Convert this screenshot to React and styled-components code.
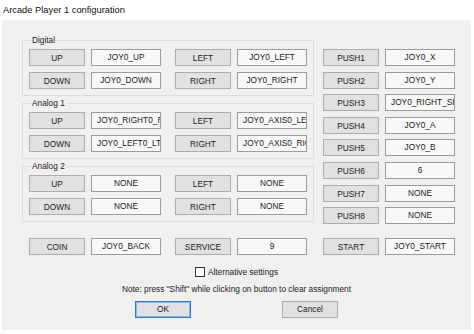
import React from 'react'
import styled, { createGlobalStyle } from 'styled-components'

const GlobalStyle = createGlobalStyle`
  html, body {
    margin: 0;
    padding: 0;
    background: #fff;
  }

  body {
    font-family: "Liberation Sans", Arial, sans-serif;
    color: #1a1a1a;
  }
`

const groups = [
  {
    title: 'Digital',
    rows: [
      ['UP', 'JOY0_UP', 'LEFT', 'JOY0_LEFT'],
      ['DOWN', 'JOY0_DOWN', 'RIGHT', 'JOY0_RIGHT'],
    ],
  },
  {
    title: 'Analog 1',
    rows: [
      ['UP', 'JOY0_RIGHT0_RIGHT', 'LEFT', 'JOY0_AXIS0_LEFT'],
      ['DOWN', 'JOY0_LEFT0_LTRIGGER', 'RIGHT', 'JOY0_AXIS0_RIGHT'],
    ],
  },
  {
    title: 'Analog 2',
    rows: [
      ['UP', 'NONE', 'LEFT', 'NONE'],
      ['DOWN', 'NONE', 'RIGHT', 'NONE'],
    ],
  },
]

const pushes = [
  ['PUSH1', 'JOY0_X'],
  ['PUSH2', 'JOY0_Y'],
  ['PUSH3', 'JOY0_RIGHT_SHOULDER'],
  ['PUSH4', 'JOY0_A'],
  ['PUSH5', 'JOY0_B'],
  ['PUSH6', '6'],
  ['PUSH7', 'NONE'],
  ['PUSH8', 'NONE'],
]

const Binding = ({ name, value }) => (
  <Pair>
    <KeyButton>{name}</KeyButton>
    <Value>{value}</Value>
  </Pair>
)

const App = () => (
  <>
    <GlobalStyle />
    <Window>
      <TitleBar>Arcade Player 1 configuration</TitleBar>
      <Client>
        <Top>
          <Groups>
            {groups.map(group => (
              <Group key={group.title}>
                <Legend>{group.title}</Legend>
                {group.rows.map(row => (
                  <Row key={row[0]}>
                    <Binding name={row[0]} value={row[1]} />
                    <Binding name={row[2]} value={row[3]} />
                  </Row>
                ))}
              </Group>
            ))}
          </Groups>
          <PushColumn>
            {pushes.map(([name, value]) => (
              <Binding key={name} name={name} value={value} />
            ))}
          </PushColumn>
        </Top>
        <BottomRow>
          <Binding name="COIN" value="JOY0_BACK" />
          <Binding name="SERVICE" value="9" />
          <Binding name="START" value="JOY0_START" />
        </BottomRow>
        <CheckRow>
          <Box />
          Alternative settings
        </CheckRow>
        <Note>Note: press "Shift" while clicking on button to clear assignment</Note>
        <Actions>
          <DialogButton $default>OK</DialogButton>
          <DialogButton>Cancel</DialogButton>
        </Actions>
      </Client>
    </Window>
  </>
)

export default App

const Window = styled.div`
  width: 474px;
  height: 334px;
  background: #fff;
  display: flex;
  flex-direction: column;
  overflow: hidden;
`

const TitleBar = styled.div`
  height: 20px;
  padding-left: 3px;
  display: flex;
  align-items: center;
  font-size: 9.3px;
  color: #111;
`

const Client = styled.div`
  height: 310px;
  margin: 0 3px 0 2px;
  background: #f0f0f0;
  display: flex;
  flex-direction: column;
  font-size: 8.3px;
`

const Top = styled.div`
  display: flex;
  gap: 9px;
  padding-left: 20px;
`

const Groups = styled.div`
  width: 292px;
  padding-top: 14px;
  display: flex;
  flex-direction: column;
  gap: 1px;
`

const Group = styled.fieldset`
  margin: 0;
  padding: 3px 6px 6px;
  min-width: 0;
  border: 1px solid #dcdcdc;
  display: flex;
  flex-direction: column;
  gap: 6px;
`

const Legend = styled.legend`
  margin-left: 2px;
  padding: 0 1px;
  line-height: 12px;
  font-size: 8.3px;
`

const Row = styled.div`
  display: flex;
  gap: 14px;
`

const Pair = styled.div`
  display: flex;
  gap: 6px;
`

const KeyButton = styled.div`
  width: 56px;
  height: 17px;
  box-sizing: border-box;
  border: 1px solid #adadad;
  background: #e1e1e1;
  line-height: 16px;
  text-align: center;
  white-space: nowrap;
`

const Value = styled.div`
  width: 70px;
  height: 17px;
  box-sizing: border-box;
  border: 1px solid #9c9c9c;
  background: #f8f8f8;
  padding: 0 5px;
  line-height: 14px;
  text-align: center;
  white-space: nowrap;
  overflow: hidden;
  text-overflow: clip;
`

const PushColumn = styled.div`
  padding-top: 29px;
  display: flex;
  flex-direction: column;
  gap: 5.6px;
`

const BottomRow = styled.div`
  margin-top: 14px;
  padding-left: 27px;
  display: flex;
  gap: 14px;

  & > div:last-child {
    margin-left: 2px;
  }
`

const CheckRow = styled.label`
  margin-top: 11px;
  align-self: center;
  display: flex;
  align-items: center;
  gap: 3px;
  height: 12px;
  line-height: 12px;
`

const Box = styled.span`
  width: 10px;
  height: 10px;
  box-sizing: border-box;
  border: 1px solid #333;
  background: #fff;
`

const Note = styled.div`
  margin-top: 5px;
  text-align: center;
  line-height: 12px;
`

const Actions = styled.div`
  margin-top: 6px;
  display: flex;
  justify-content: center;
  gap: 91px;
`

const DialogButton = styled.div`
  width: 56px;
  height: 17px;
  box-sizing: border-box;
  border: 1px solid ${p => (p.$default ? '#2f79c6' : '#adadad')};
  box-shadow: ${p => (p.$default ? 'inset 0 0 0 1px #8db8e4' : 'none')};
  background: #e1e1e1;
  line-height: 15px;
  text-align: center;
`
